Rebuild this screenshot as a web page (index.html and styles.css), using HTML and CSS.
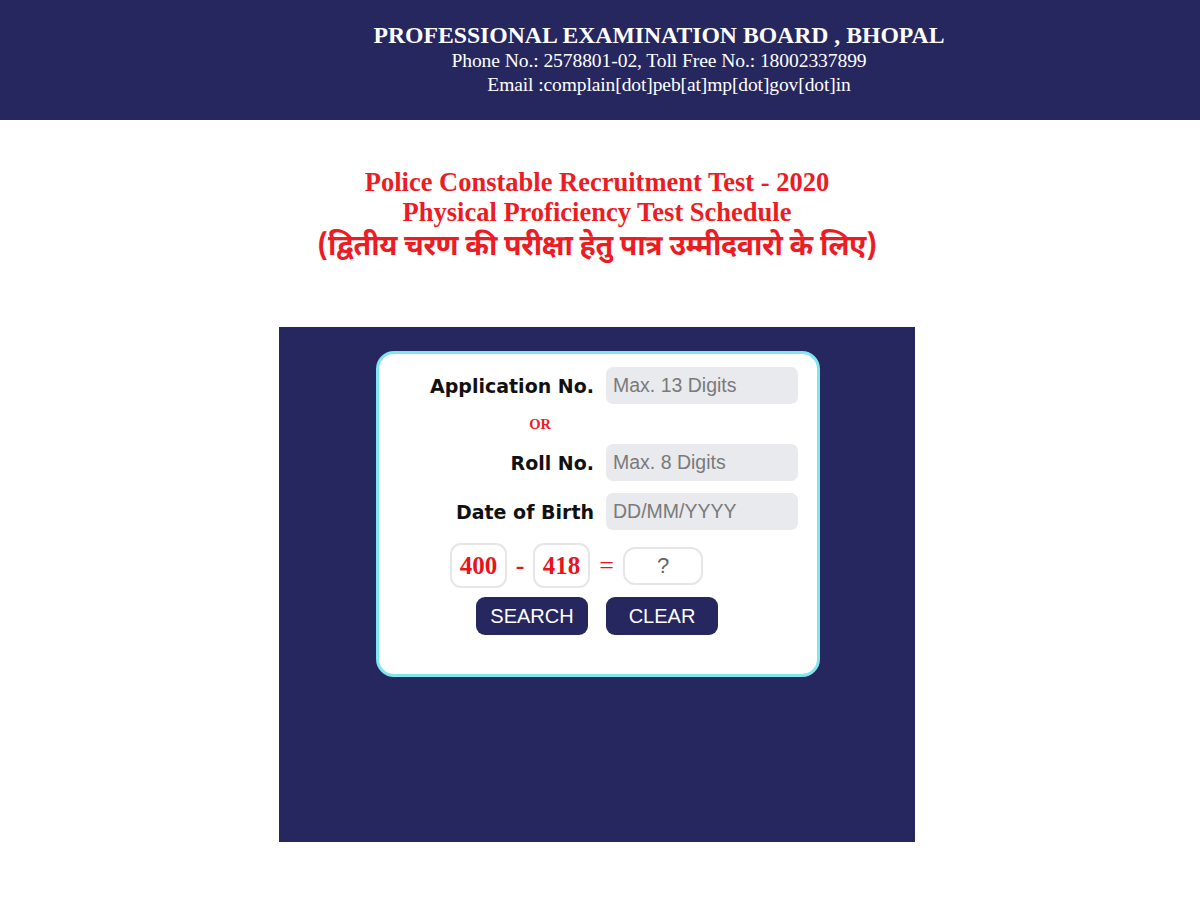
FILE: index.html
```html
<!DOCTYPE html>
<html lang="en">
<head>
<meta charset="utf-8">
<title>PEB Bhopal - Police Constable Recruitment Test 2020</title>
<link rel="stylesheet" href="styles.css">
</head>
<body>
<header class="site-header">
  <div class="header-text">
    <div class="org-name">PROFESSIONAL EXAMINATION BOARD , BHOPAL</div>
    <div class="org-phone">Phone No.: 2578801-02, Toll Free No.: 18002337899</div>
    <div class="org-email">Email :complain[dot]peb[at]mp[dot]gov[dot]in</div>
  </div>
</header>

<section class="titles">
  <div class="title-line">Police Constable Recruitment Test - 2020</div>
  <div class="title-line">Physical Proficiency Test Schedule</div>
  <div class="title-hindi">(द्वितीय चरण की परीक्षा हेतु पात्र उम्मीदवारो के लिए)</div>
</section>

<main class="panel">
  <form class="card">
    <div class="row row-app">
      <label class="label">Application No.</label>
      <input class="field" type="text" placeholder="Max. 13 Digits">
    </div>
    <div class="or">OR</div>
    <div class="row">
      <label class="label">Roll No.</label>
      <input class="field" type="text" placeholder="Max. 8 Digits">
    </div>
    <div class="row row-dob">
      <label class="label">Date of Birth</label>
      <input class="field" type="text" placeholder="DD/MM/YYYY">
    </div>
    <div class="captcha">
      <span class="cap-box">400</span>
      <span class="cap-op">-</span>
      <span class="cap-box">418</span>
      <span class="cap-eq">=</span>
      <input class="cap-ans" type="text" placeholder="?">
    </div>
    <div class="buttons">
      <button type="button" class="btn">SEARCH</button>
      <button type="button" class="btn">CLEAR</button>
    </div>
  </form>
</main>
</body>
</html>
```

FILE: styles.css
```css
* { box-sizing: border-box; }

body {
  margin: 0;
  background: #ffffff;
  font-family: "Liberation Serif", "Times New Roman", serif;
}

.site-header {
  height: 120px;
  background: #26275f;
  color: #ffffff;
  padding: 22px 0 0 118px;
  text-align: center;
}

.org-name {
  font-weight: bold;
  font-size: 23.7px;
  line-height: 27px;
}

.org-phone {
  font-size: 19.6px;
  line-height: 24px;
  letter-spacing: -0.1px;
}

.org-email {
  font-size: 19.5px;
  line-height: 24px;
  padding-left: 20px;
  letter-spacing: -0.1px;
}

.titles {
  text-align: center;
  color: #ec1c24;
  padding: 47px 6px 0 0;
}

.title-line {
  font-weight: bold;
  font-size: 26.5px;
  line-height: 30px;
}

.title-hindi {
  font-family: "Noto Sans Devanagari", "Lohit Devanagari", "Mangal", sans-serif;
  font-weight: bold;
  font-size: 28.6px;
  line-height: 36px;
  letter-spacing: -0.4px;
  margin-top: 3px;
}

.panel {
  width: 636px;
  height: 515px;
  margin: 61px 0 0 279px;
  background: #26275f;
  padding: 24px 0 0 97px;
}

.card {
  width: 444px;
  height: 326px;
  background: #ffffff;
  border: 3px solid #7fe6f0;
  border-radius: 18px;
  padding-top: 13px;
  font-family: "DejaVu Sans", Verdana, sans-serif;
}

.row {
  display: flex;
  align-items: center;
  gap: 12px;
}

.label {
  width: 215px;
  text-align: right;
  font-weight: bold;
  font-size: 19px;
  color: #111111;
  padding-top: 1px;
}

.field {
  width: 192px;
  height: 37px;
  border: none;
  border-radius: 7px;
  background: #e8eaed;
  padding: 0 7px;
  font-family: "Liberation Sans", Arial, sans-serif;
  font-size: 19.5px;
  color: #333;
}

.field::placeholder { color: #7a7a7a; }

.or {
  width: 322px;
  text-align: center;
  color: #ee1c24;
  font-family: "Liberation Serif", serif;
  font-weight: bold;
  font-size: 14.5px;
  height: 40px;
  line-height: 40px;
}

.row-dob { margin-top: 12px; }

.captcha {
  display: flex;
  align-items: center;
  margin: 13px 0 0 71px;
  height: 45px;
}

.cap-box {
  width: 57px;
  height: 45px;
  border: 2px solid #e6e6e6;
  border-radius: 11px;
  display: flex;
  align-items: center;
  justify-content: center;
  color: #e8141c;
  font-family: "Liberation Serif", serif;
  font-weight: bold;
  font-size: 25px;
}

.cap-op {
  width: 26px;
  text-align: center;
  color: #e8141c;
  font-family: "Liberation Serif", serif;
  font-weight: bold;
  font-size: 26px;
}

.cap-eq {
  width: 33px;
  text-align: center;
  color: #e8141c;
  font-family: "Liberation Serif", serif;
  font-size: 26px;
}

.cap-ans {
  width: 80px;
  height: 38px;
  border: 2px solid #e6e6e6;
  border-radius: 12px;
  text-align: center;
  font-family: "Liberation Sans", Arial, sans-serif;
  font-size: 22px;
  background: #fff;
}

.cap-ans::placeholder { color: #666; }

.buttons {
  display: flex;
  gap: 18px;
  margin: 9px 0 0 97px;
}

.btn {
  width: 112px;
  height: 38px;
  border: none;
  border-radius: 9px;
  background: #26275f;
  color: #ffffff;
  font-family: "Liberation Sans", Arial, sans-serif;
  font-size: 20px;
  padding: 0;
}
```
